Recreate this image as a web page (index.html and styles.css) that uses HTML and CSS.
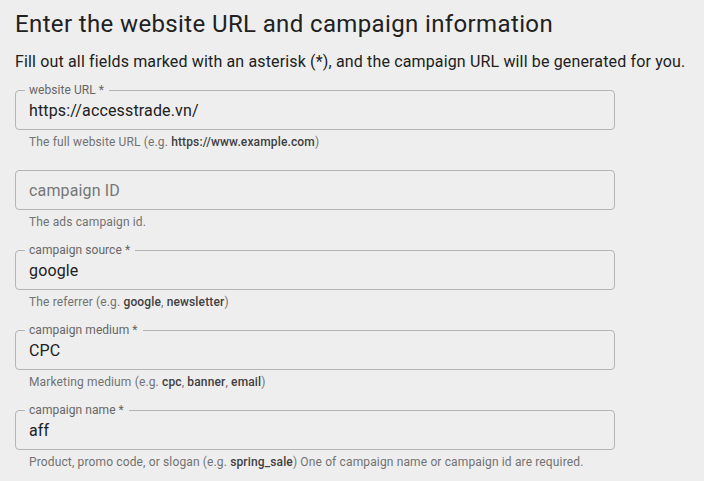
FILE: index.html
```html
<!DOCTYPE html>
<html lang="en">
<head>
<meta charset="utf-8">
<title>Campaign URL Builder</title>
<link rel="stylesheet" href="styles.css">
</head>
<body>
<main class="page">
  <h1 class="title">Enter the website URL and campaign information</h1>
  <p class="intro">Fill out all fields marked with an asterisk (*), and the campaign URL will be generated for you.</p>

  <div class="field">
    <div class="box">
      <span class="label">website URL *</span>
      <span class="value">https://accesstrade.vn/</span>
    </div>
    <p class="help">The full website URL (e.g. <b>https://www.example.com</b>)</p>
  </div>

  <div class="field">
    <div class="box">
      <span class="placeholder">campaign ID</span>
    </div>
    <p class="help">The ads campaign id.</p>
  </div>

  <div class="field">
    <div class="box">
      <span class="label">campaign source *</span>
      <span class="value">google</span>
    </div>
    <p class="help">The referrer (e.g. <b>google</b>, <b>newsletter</b>)</p>
  </div>

  <div class="field">
    <div class="box">
      <span class="label">campaign medium *</span>
      <span class="value">CPC</span>
    </div>
    <p class="help">Marketing medium (e.g. <b>cpc</b>, <b>banner</b>, <b>email</b>)</p>
  </div>

  <div class="field">
    <div class="box">
      <span class="label">campaign name *</span>
      <span class="value">aff</span>
    </div>
    <p class="help">Product, promo code, or slogan (e.g. <b>spring_sale</b>) One of campaign name or campaign id are required.</p>
  </div>
</main>
</body>
</html>
```

FILE: styles.css
```css
html, body {
  margin: 0;
  padding: 0;
  background: #eeeeee;
}

body {
  font-family: Roboto, "Noto Sans", "Liberation Sans", sans-serif;
  color: #212121;
}

.page {
  display: flex;
  flex-direction: column;
  padding: 8px 0 0 15px;
}

.title {
  margin: 0;
  font-size: 24px;
  line-height: 32px;
  font-weight: 400;
  letter-spacing: 0.37px;
  color: #212121;
}

.intro {
  margin: 10px 0 0 0;
  font-size: 16px;
  line-height: 24px;
  letter-spacing: 0.15px;
  color: #212121;
}

.field {
  display: flex;
  flex-direction: column;
  width: 600px;
  margin-bottom: 20px;
}

.intro + .field {
  margin-top: 16px;
}

.box {
  position: relative;
  box-sizing: border-box;
  height: 40px;
  border: 1px solid #b5b5b5;
  border-radius: 4px;
  padding: 0 13px;
  display: flex;
  align-items: center;
}

.label {
  position: absolute;
  top: -7px;
  left: 9px;
  padding: 0 5px 0 4px;
  background: #eeeeee;
  font-size: 12px;
  line-height: 12px;
  letter-spacing: 0.05px;
  color: #666666;
}

.value {
  font-size: 16px;
  letter-spacing: 0.15px;
  color: #212121;
}

.placeholder {
  font-size: 16px;
  letter-spacing: 0.15px;
  color: #767676;
}

.help {
  margin: 4px 0 0 14px;
  font-size: 12px;
  line-height: 16px;
  letter-spacing: 0.14px;
  color: #727272;
  white-space: nowrap;
}

.help b {
  font-weight: 500;
  color: #3f3f3f;
}
```
